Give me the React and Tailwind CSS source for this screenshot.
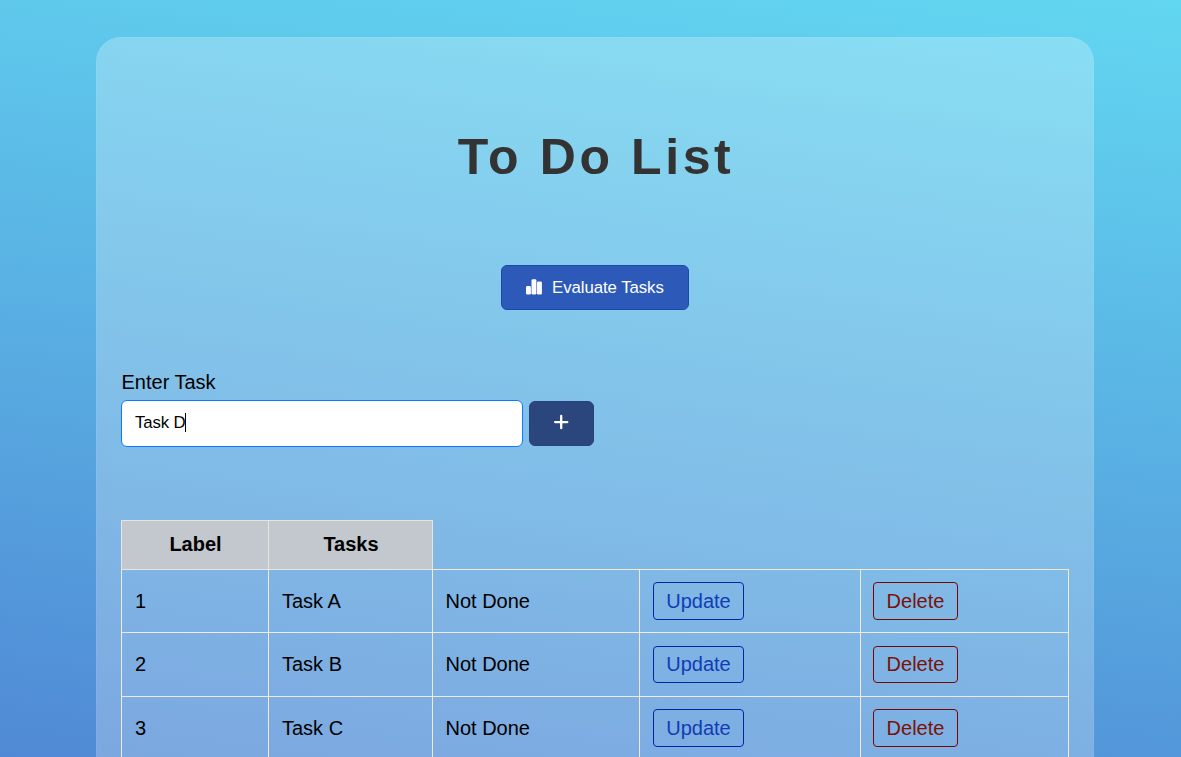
const tasks = [
  { label: 1, name: "Task A", row: "h-[63px]", button: "h-[38px]" },
  { label: 2, name: "Task B", row: "h-[64px] [&>td]:pb-px", button: "h-[37px]" },
  { label: 3, name: "Task C", row: "h-[63px]", button: "h-[38px]" },
];

function ChartIcon() {
  return (
    <svg className="mb-[2px] h-4 w-4 shrink-0" viewBox="0 0 16 16" fill="#fff">
      <rect x="0" y="7" width="4.9" height="8.6" rx="1.4" />
      <rect x="5.5" y="0.2" width="4.9" height="15.4" rx="1.4" />
      <rect x="11" y="2.4" width="4.9" height="13.2" rx="1.4" />
    </svg>
  );
}

function PlusIcon() {
  return (
    <svg className="h-4 w-4" viewBox="0 0 16 16" stroke="#fff" strokeWidth="2.3" strokeLinecap="round">
      <path d="M8.2 2v12.2M2.1 8.1h12.2" />
    </svg>
  );
}

export default function App() {
  return (
    <div className="h-[757px] overflow-hidden bg-[linear-gradient(188deg,#62d7f1_0%,#5089d5_100%)] pt-[37px] pl-24 font-['Liberation_Sans',Arial,sans-serif] text-xl text-black">
      <main className="flex h-[900px] w-[998px] flex-col rounded-[25px] border border-white/5 bg-white/25 px-6">
        <h1 className="mt-[89px] h-[60px] pl-[2px] text-center text-[50px] leading-[60px] font-bold tracking-[3.6px] text-[#333]">
          To Do List
        </h1>
        <button className="mt-[78px] flex h-[45px] w-[188px] items-center gap-[10px] self-center rounded-md border border-[#1b49ad] bg-[#2d5ab8] pl-6 text-[16.8px] tracking-[-0.06px] text-white">
          <ChartIcon />
          Evaluate Tasks
        </button>
        <label className="mt-[57px] h-[30px] pl-[0.5px] leading-[30px]">Enter Task</label>
        <div className="mt-[3px] flex items-center gap-[6px]">
          <div className="flex h-[47px] w-[402px] items-center rounded-md border border-[#0a7cff] bg-white pb-[2px] pl-[13px] text-[16.8px] tracking-[-0.15px]">
            Task D<span className="h-[19px] w-px bg-black" />
          </div>
          <button className="flex h-[45px] w-[65px] items-center justify-center rounded-md border border-[#26437f] bg-[#2b457d] pr-px pb-[3px]">
            <PlusIcon />
          </button>
        </div>
        <table className="mt-[73px] w-[948px] shrink-0 table-fixed border-collapse">
          <colgroup>
            <col className="w-[147px]" />
            <col className="w-[164px]" />
            <col className="w-[207px]" />
            <col className="w-[221px]" />
            <col className="w-[208px]" />
          </colgroup>
          <thead>
            <tr className="h-[49px]">
              <th className="border border-[#e8e4df] bg-[#c2c8ce] pb-[2px] pl-px">Label</th>
              <th className="border border-[#e8e4df] bg-[#c2c8ce] pb-[2px] pl-px">Tasks</th>
            </tr>
          </thead>
          <tbody>
            {tasks.map((task) => (
              <tr key={task.label} className={task.row}>
                <td className="border border-[#f2ead9] px-[13px]">{task.label}</td>
                <td className="border border-[#f2ead9] px-[13px]">{task.name}</td>
                <td className="border border-[#f2ead9] px-[12.5px]">Not Done</td>
                <td className="border border-[#f2ead9] px-[13px]">
                  <button className={`block w-[91px] rounded border border-[#0424a8] text-[#123cb4] ${task.button}`}>
                    Update
                  </button>
                </td>
                <td className="border border-[#f2ead9] px-[12px]">
                  <button className={`block w-[85px] rounded border border-[#7a0505] text-[#7a1208] ${task.button}`}>
                    Delete
                  </button>
                </td>
              </tr>
            ))}
          </tbody>
        </table>
      </main>
    </div>
  );
}
